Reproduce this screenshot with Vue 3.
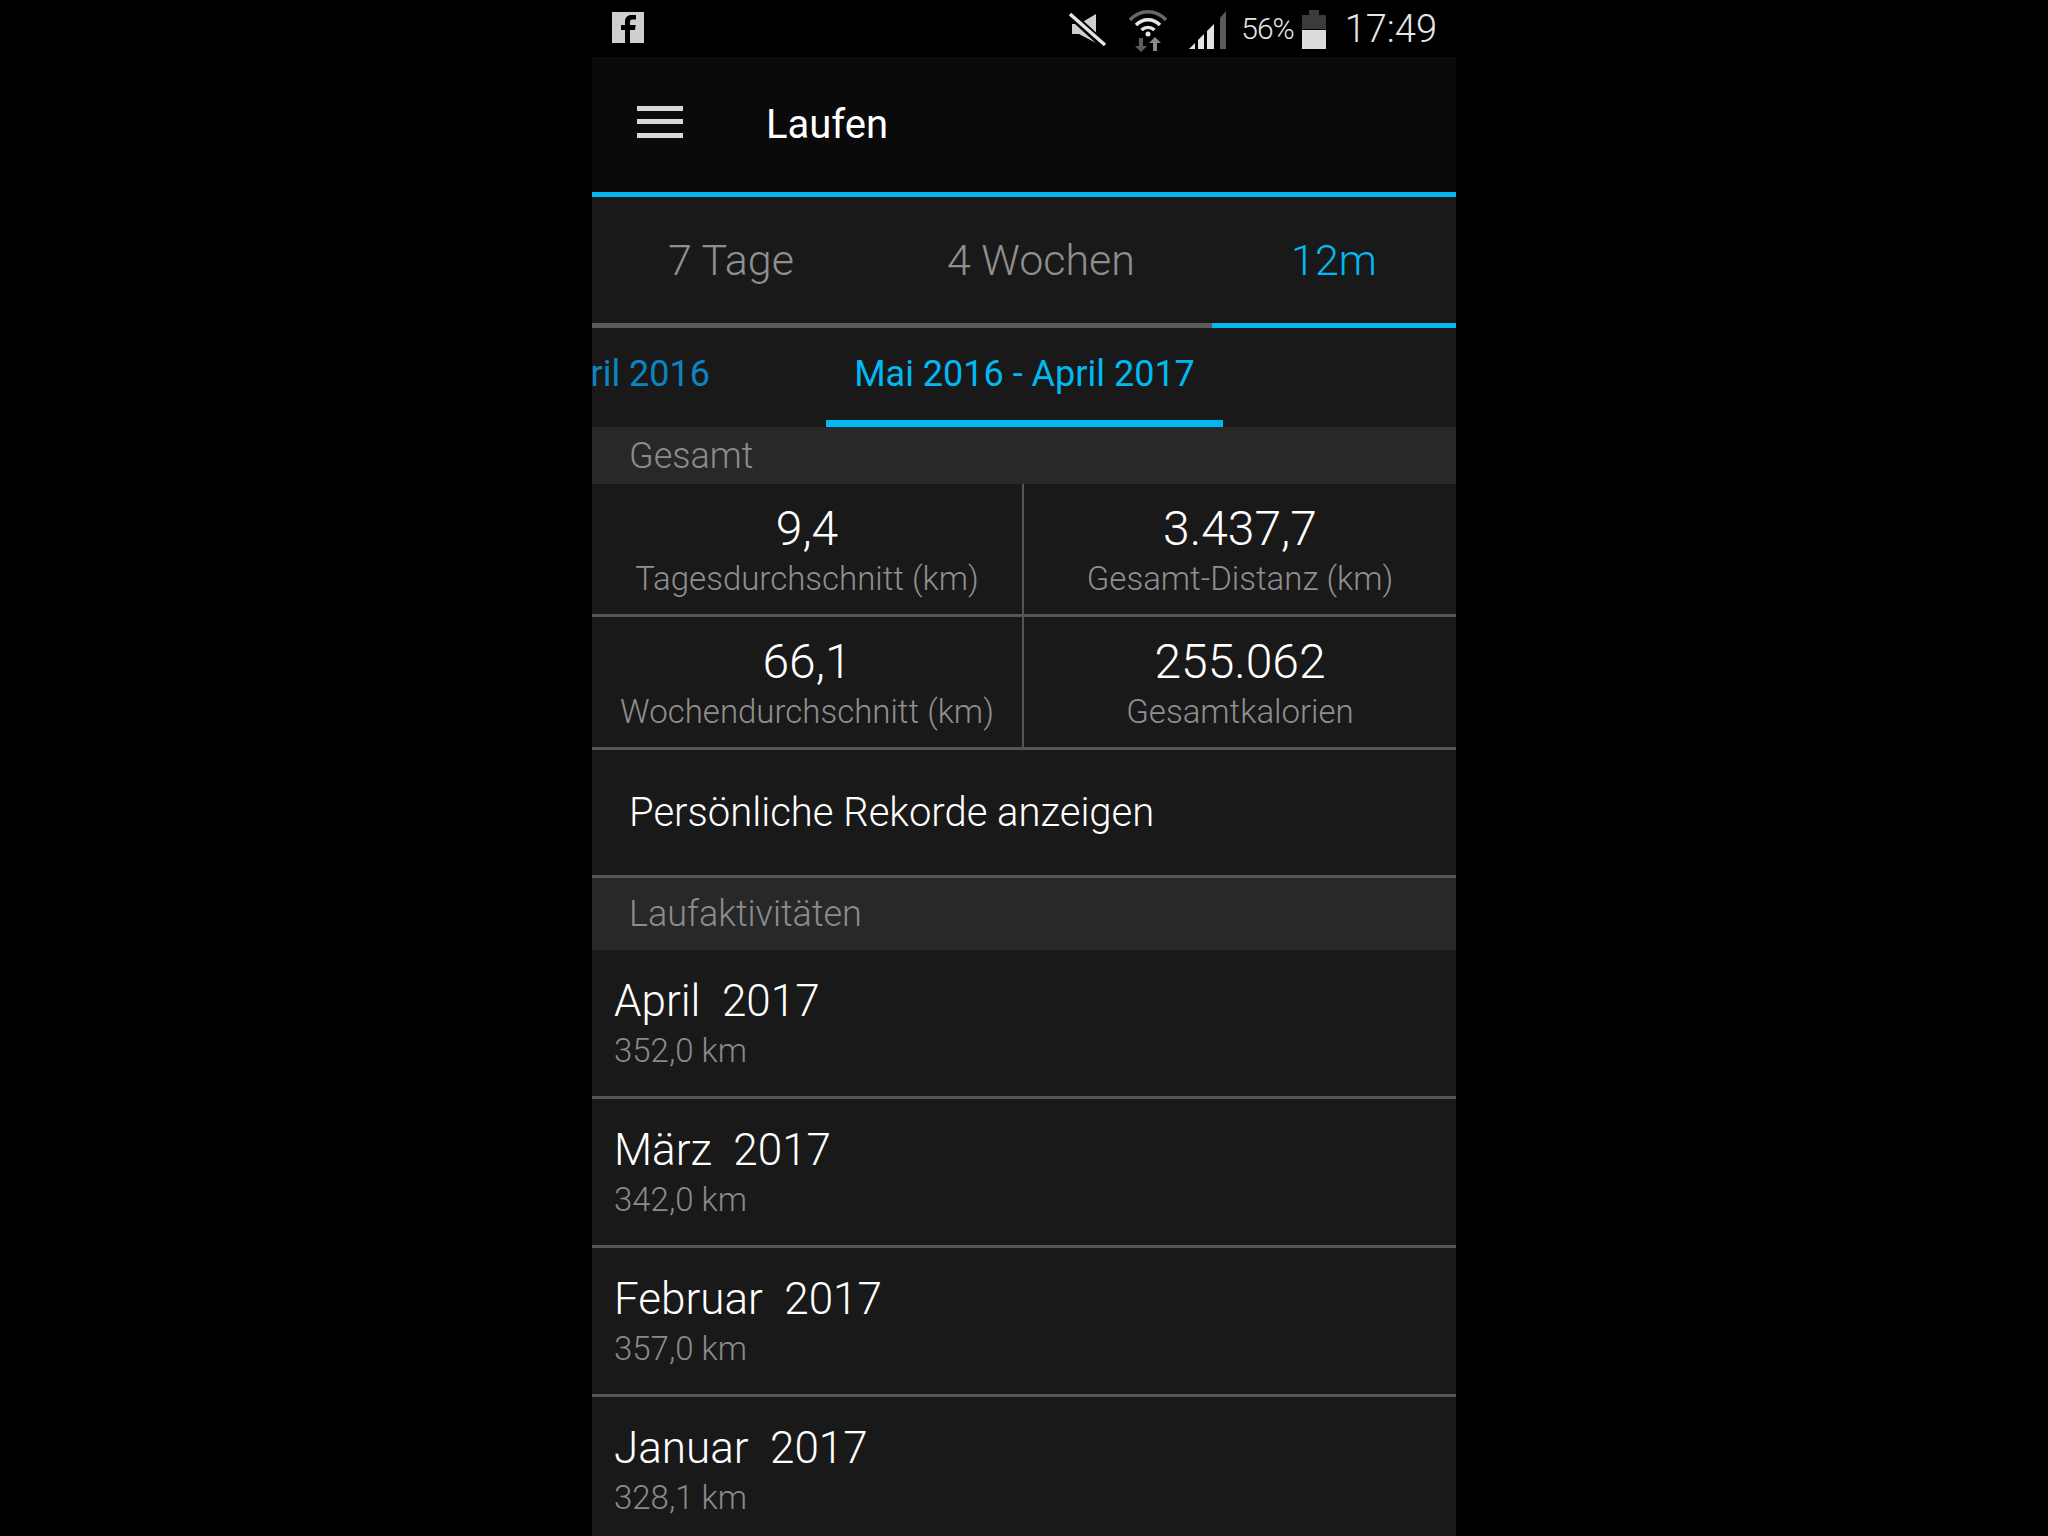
<script setup>
const tabs = [
  { label: '7 Tage', width: 278 },
  { label: '4 Wochen', width: 342 },
  { label: '12m', width: 244, active: true },
]
const stats = [
  { value: '9,4', label: 'Tagesdurchschnitt (km)' },
  { value: '3.437,7', label: 'Gesamt-Distanz (km)' },
  { value: '66,1', label: 'Wochendurchschnitt (km)' },
  { value: '255.062', label: 'Gesamtkalorien' },
]
const months = [
  { name: 'April\u00a0\u00a02017', km: '352,0 km' },
  { name: 'März\u00a0\u00a02017', km: '342,0 km' },
  { name: 'Februar\u00a0\u00a02017', km: '357,0 km' },
  { name: 'Januar\u00a0\u00a02017', km: '328,1 km' },
]
</script>

<template>
  <div class="page">
    <main class="phone">
      <div class="status">
        <svg class="fb" width="32" height="31" viewBox="0 0 32 31">
          <rect width="32" height="31" fill="#cfcfcf" />
          <path d="M18 31V18h5l.7-5H18v-3c0-1.5.6-2.400 2.400-2.400H24V3h-4.500C15.500 3 13 5.500 13 9.300V13H9v5h4v13z" fill="#000" />
        </svg>
        <div class="status-right">
          <svg class="mute" width="38" height="36" viewBox="0 0 38 36">
            <path d="M3 12h7L27 2v29L10 22H3z" fill="#cfcfcf" />
            <path d="M2 3l34 31" stroke="#000" stroke-width="8" />
            <path d="M1 2l35 31" stroke="#e4e4e4" stroke-width="3.500" />
          </svg>
          <svg class="wifi" width="40" height="44" viewBox="0 0 40 44">
            <path d="M2 12C12 1 28 1 38 12" fill="none" stroke="#666" stroke-width="3.500" />
            <path d="M8 17c7-7 17-7 24 0" fill="none" stroke="#e8e8e8" stroke-width="3.500" />
            <path d="M13.500 22c4-3.500 9-3.500 13 0" fill="none" stroke="#e8e8e8" stroke-width="3.500" />
            <circle cx="20" cy="26" r="2.500" fill="#e8e8e8" />
            <path d="M15 30v8h4l-6 6-6-6h4v-8z" fill="#5c5c5c" />
            <path d="M27 29l6 6h-4v8h-4v-8h-4z" fill="#8a8a8a" />
          </svg>
          <svg class="signal" width="38" height="40" viewBox="0 0 38 40">
            <path d="M0 39l6-6v6z" fill="#e4e4e4" />
            <path d="M9 30l6-6v15H9z" fill="#e4e4e4" />
            <path d="M18 21l7-7v25h-7z" fill="#e4e4e4" />
            <path d="M31 8l6-7v38h-6z" fill="#5a5a5a" />
          </svg>
          <span class="pct">56%</span>
          <svg class="battery" width="24" height="39" viewBox="0 0 24 39">
            <path d="M7 0h10v5h7v14H0V5h7z" fill="#3b3b3b" />
            <rect y="20" width="24" height="19" fill="#dcdcdc" />
          </svg>
          <span class="time">17:49</span>
        </div>
      </div>

      <header class="appbar">
        <svg class="menu" width="46" height="32" viewBox="0 0 46 32">
          <path d="M0 0h46v5H0zM0 13h46v5H0zM0 27h46v5H0z" fill="#d8d8d8" />
        </svg>
        <h1 class="title">Laufen</h1>
      </header>

      <nav class="tabs">
        <div
          v-for="tab in tabs"
          :key="tab.label"
          class="tab"
          :class="{ 'tab-active': tab.active }"
          :style="{ width: tab.width + 'px' }"
        >{{ tab.label }}</div>
      </nav>

      <div class="pager">
        <div class="pager-prev">Mai 2015 - April 2016</div>
        <div class="pager-current">Mai 2016 - April 2017</div>
        <div></div>
      </div>

      <div class="section section-first">Gesamt</div>

      <div class="stats">
        <div v-for="s in stats" :key="s.label" class="stat">
          <div class="stat-value">{{ s.value }}</div>
          <div class="stat-label">{{ s.label }}</div>
        </div>
      </div>

      <div class="records">Persönliche Rekorde anzeigen</div>

      <div class="section section-second">Laufaktivitäten</div>

      <div v-for="m in months" :key="m.name" class="month">
        <div class="month-name">{{ m.name }}</div>
        <div class="month-km">{{ m.km }}</div>
      </div>
    </main>
  </div>
</template>

<style>
html, body { margin: 0; background: #000; }
</style>

<style scoped>
.page {
  width: 2048px;
  height: 1536px;
  overflow: hidden;
  background: #000;
  display: flex;
  justify-content: center;
  font-family: Roboto, "Liberation Sans", sans-serif;
  font-weight: 300;
}
.phone {
  width: 864px;
  height: 1536px;
  overflow: hidden;
  background: #191919;
  flex: none;
}
.status {
  height: 57px;
  background: #000;
  display: flex;
  align-items: center;
  justify-content: space-between;
  padding: 0 19px 0 20px;
  box-sizing: border-box;
  color: #e6e6e6;
}
.fb { margin-top: -2px; }
.status-right { display: flex; align-items: center; }
.mute { margin-right: 21px; margin-top: 2px; }
.wifi { margin-right: 21px; margin-top: 2px; }
.signal { margin-right: 14px; margin-top: 2px; }
.pct { font-size: 30px; margin-right: 8px; letter-spacing: -1px; }
.battery { margin-right: 19px; margin-top: 2px; }
.time { font-size: 38px; }
.appbar {
  height: 135px;
  background: #0a0a0a;
  display: flex;
  align-items: center;
  padding-left: 45px;
}
.menu { margin-top: -5px; }
.title {
  margin: 0 0 0 83px;
  font-size: 40px;
  font-weight: 400;
  color: #fff;
}
.tabs {
  height: 136px;
  border-top: 5px solid #00b9f2;
  display: flex;
  box-sizing: content-box;
}
.tab {
  height: 131px;
  box-sizing: border-box;
  border-bottom: 5px solid #5a5a5a;
  display: flex;
  align-items: center;
  justify-content: center;
  font-size: 43px;
  color: #8f8f8f;
}
.tab-active { color: #00b9f2; border-bottom-color: #00b9f2; }
.pager {
  height: 94px;
  display: grid;
  grid-template-columns: 234px 397px 1fr;
  font-size: 36px;
  font-weight: 400;
}
.pager-prev {
  overflow: hidden;
  display: flex;
  justify-content: flex-end;
  white-space: nowrap;
  padding-right: 116px;
  padding-top: 20px;
  color: #0a85c0;
}
.pager-current {
  text-align: center;
  padding-top: 20px;
  color: #00b9f2;
  border-bottom: 7px solid #00b9f2;
}
.section {
  background: #282828;
  display: flex;
  align-items: center;
  padding-left: 37px;
  font-size: 36px;
  color: #8c8c8c;
}
.section-first { height: 57px; }
.section-second { height: 72px; }
.stats {
  display: grid;
  grid-template-columns: 432px 432px;
}
.stat {
  height: 133px;
  box-sizing: border-box;
  border-bottom: 3px solid #555;
  text-align: center;
  padding-top: 17px;
}
.stat:nth-child(odd) { border-right: 2px solid #555; }
.stat-value { font-size: 48px; line-height: 56px; color: #fff; }
.stat-label { font-size: 33px; line-height: 44px; color: #8f8f8f; }
.records {
  height: 128px;
  box-sizing: border-box;
  border-bottom: 3px solid #555;
  display: flex;
  align-items: center;
  padding-left: 37px;
  font-size: 40px;
  color: #fff;
}
.month {
  height: 149px;
  box-sizing: border-box;
  border-bottom: 3px solid #555;
  padding: 25px 0 0 22px;
}
.month-name { font-size: 44px; line-height: 52px; color: #fff; }
.month-km { font-size: 33px; line-height: 48px; color: #8a8a8a; }
</style>
